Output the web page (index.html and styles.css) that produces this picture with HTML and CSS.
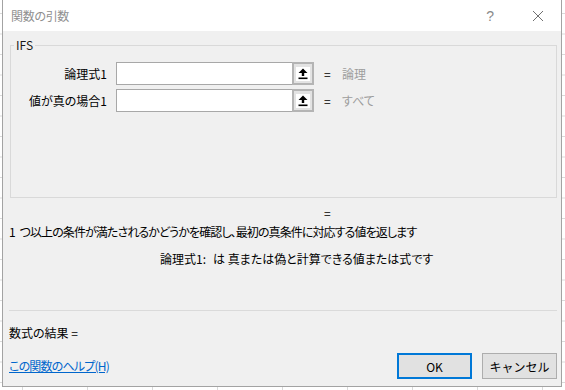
FILE: index.html
```html
<!DOCTYPE html>
<html lang="ja">
<head>
    <meta charset="UTF-8">
    <title>関数の引数</title>
    <link rel="stylesheet" href="styles.css">
</head>
<body>
    <div class="window">
        <div class="titlebar">
            <span class="title">関数の引数</span>
            <span class="help">?</span>
            <span class="close">
                <svg width="12" height="12" viewBox="0 0 12 12"><path d="M1 1 L11 11 M11 1 L1 11" stroke="#707070" stroke-width="1" fill="none"/></svg>
            </span>
        </div>

        <div class="content">
            <fieldset class="group">
                <legend>IFS</legend>
                <div class="args">
                    <div class="arg">
                        <label class="arg-name">論理式1</label>
                        <div class="field">
                            <input type="text" class="field-input">
                            <span class="pick"><span class="pick-face">
                                <svg width="12" height="12" viewBox="0 0 12 12"><path d="M6 0.5 L10.5 5 L7.2 5 L7.2 8 L4.8 8 L4.8 5 L1.5 5 Z" fill="#000"/><rect x="1.5" y="9.5" width="9" height="1.6" fill="#000"/></svg>
                            </span></span>
                        </div>
                        <span class="eq">=</span>
                        <span class="hint">論理</span>
                    </div>
                    <div class="arg">
                        <label class="arg-name">値が真の場合1</label>
                        <div class="field">
                            <input type="text" class="field-input">
                            <span class="pick"><span class="pick-face">
                                <svg width="12" height="12" viewBox="0 0 12 12"><path d="M6 0.5 L10.5 5 L7.2 5 L7.2 8 L4.8 8 L4.8 5 L1.5 5 Z" fill="#000"/><rect x="1.5" y="9.5" width="9" height="1.6" fill="#000"/></svg>
                            </span></span>
                        </div>
                        <span class="eq">=</span>
                        <span class="hint">すべて</span>
                    </div>
                </div>
            </fieldset>

            <div class="total-eq">=</div>
            <p class="desc">1 つ以上の条件が満たされるかどうかを確認し、最初の真条件に対応する値を返します</p>
            <p class="arg-desc"><span class="arg-desc-name">論理式1:</span>は 真または偽と計算できる値または式です</p>

            <div class="sep"></div>

            <div class="formula-result">数式の結果 =</div>

            <div class="footer">
                <a href="#" class="help-link">この関数のヘルプ(H)</a>
                <div class="button-group">
                    <button class="button primary">OK</button>
                    <button class="button">キャンセル</button>
                </div>
            </div>
        </div>
    </div>
</body>
</html>
```

FILE: styles.css
```css
body {
    margin: 0;
    font-family: "Noto Sans CJK JP", "Noto Sans", sans-serif;
    font-size: 12px;
    line-height: 16px;
    color: #000;
    background-color: #fff;
    background-image:
        linear-gradient(to right, #dadada 1px, transparent 1px),
        linear-gradient(to bottom, #dadada 1px, transparent 1px);
    background-size: 65px 20.5px;
    background-position: 22px 13px;
    font-feature-settings: "palt";
}
.window {
    width: 558px;
    margin-left: 2px;
    border: 1px solid #a3a3a3;
    border-top: none;
    background-color: #f0f0f0;
}
.titlebar {
    height: 31px;
    background-color: #fff;
    display: flex;
    align-items: center;
}
.title {
    margin-left: 8px;
    font-size: 12px;
    letter-spacing: -0.3px;
    color: #8f8f8f;
    flex: 1;
}
.help {
    font-family: "Liberation Sans", sans-serif;
    font-size: 14px;
    color: #8a8a8a;
    margin-right: 38px;
}
.close {
    display: flex;
    margin-right: 17px;
}
.content {
    padding: 0 4px 7px 6px;
}
.group {
    margin: 6px 0 0 1px;
    padding: 9px 0 0 0;
    border: 1px solid #d9d9d9;
    min-width: 0;
}
.group legend {
    margin-left: 3px;
    padding: 0 2px;
    line-height: 16px;
    color: #1a1a1a;
}
.args {
    height: 135px;
    display: flex;
    flex-direction: column;
    gap: 4px;
}
.arg {
    display: flex;
    align-items: center;
    height: 23px;
}
.arg-name {
    width: 96px;
    text-align: right;
    margin-right: 9px;
}
.field {
    display: flex;
    width: 198px;
    height: 23px;
}
.field-input {
    flex: 1;
    min-width: 0;
    margin: 0;
    padding: 0 3px;
    border: 1px solid #a8a8a8;
    border-right: none;
    background-color: #fff;
    outline: none;
}
.pick {
    width: 22px;
    box-sizing: border-box;
    border: 2px solid #b4b4b4;
    background-color: #e3e3e3;
    display: flex;
    align-items: center;
    justify-content: center;
}
.pick-face {
    width: 14px;
    height: 14px;
    background-color: #fff;
    display: flex;
    align-items: center;
    justify-content: center;
}
.eq {
    margin-left: 10px;
    width: 18px;
}
.hint {
    color: #9d9d9d;
}
.total-eq {
    margin-top: 7px;
    padding-left: 315px;
}
.desc {
    margin: 3px 0 0;
    letter-spacing: -0.9px;
    word-spacing: 3px;
}
.arg-desc {
    margin: 11px 0 0;
    padding-left: 151px;
}
.arg-desc-name {
    margin-right: 7px;
}
.sep {
    margin-top: 43px;
    height: 1px;
    background-color: #dadada;
}
.formula-result {
    margin-top: 14px;
}
.footer {
    margin-top: 12px;
    display: flex;
    align-items: center;
    justify-content: space-between;
}
.help-link {
    color: #0066cc;
    text-decoration: underline;
    letter-spacing: -0.8px;
}
.button-group {
    display: flex;
    gap: 10px;
}
.button {
    width: 75px;
    height: 26px;
    margin: 0;
    padding: 0;
    font-family: inherit;
    font-size: 12px;
    color: #000;
    background-color: #e1e1e1;
    border: 1px solid #adadad;
    box-sizing: border-box;
}
.button.primary {
    border: 2px solid #0078d7;
}
```
